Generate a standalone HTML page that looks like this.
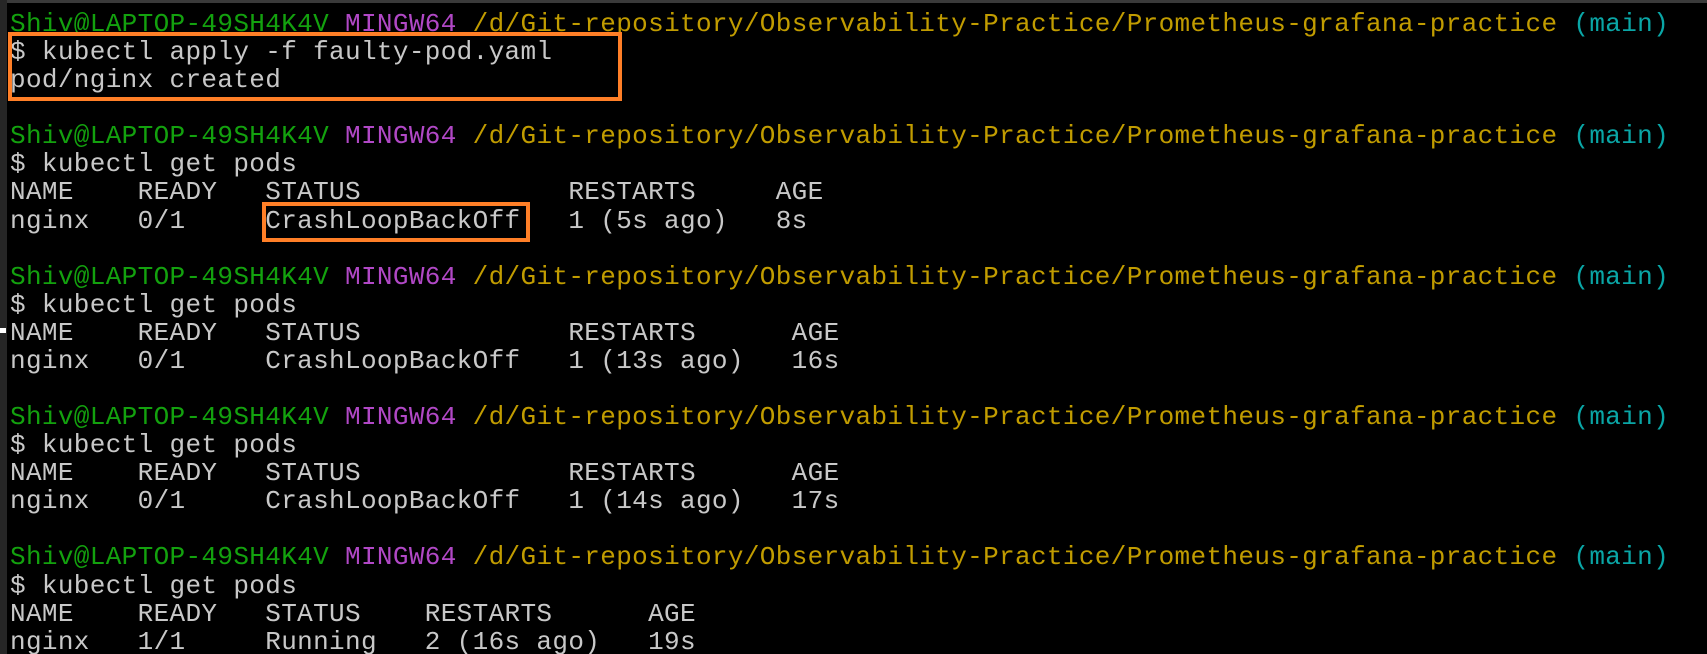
<!DOCTYPE html>
<html><head><meta charset="utf-8"><style>
html,body{margin:0;padding:0;background:#000;width:1707px;height:654px;overflow:hidden;position:relative}
.top{position:absolute;left:0;top:0;width:1707px;height:3px;background:#3a3a3a}
.left{position:absolute;left:0;top:0;width:7px;height:654px;background:#262626}
.mark{position:absolute;left:0;top:328px;width:6px;height:5px;background:#fff}
pre{position:absolute;left:10px;top:10px;margin:0;font-family:"Liberation Mono",monospace;font-size:26px;letter-spacing:0.35px;line-height:28.08px;color:#c8c8c8;white-space:pre}
.g{color:#13a10e}.m{color:#b148c6}.y{color:#c19c00}.c{color:#0aa6a6}
.box{position:absolute;border:4px solid #ff7f27;box-sizing:border-box}
</style></head><body>
<div class="top"></div><div class="left"></div><div class="mark"></div>
<pre><span class="g">Shiv@LAPTOP-49SH4K4V</span> <span class="m">MINGW64</span> <span class="y">/d/Git-repository/Observability-Practice/Prometheus-grafana-practice</span> <span class="c">(main)</span>
$ kubectl apply -f faulty-pod.yaml
pod/nginx created

<span class="g">Shiv@LAPTOP-49SH4K4V</span> <span class="m">MINGW64</span> <span class="y">/d/Git-repository/Observability-Practice/Prometheus-grafana-practice</span> <span class="c">(main)</span>
$ kubectl get pods
NAME    READY   STATUS             RESTARTS     AGE
nginx   0/1     CrashLoopBackOff   1 (5s ago)   8s

<span class="g">Shiv@LAPTOP-49SH4K4V</span> <span class="m">MINGW64</span> <span class="y">/d/Git-repository/Observability-Practice/Prometheus-grafana-practice</span> <span class="c">(main)</span>
$ kubectl get pods
NAME    READY   STATUS             RESTARTS      AGE
nginx   0/1     CrashLoopBackOff   1 (13s ago)   16s

<span class="g">Shiv@LAPTOP-49SH4K4V</span> <span class="m">MINGW64</span> <span class="y">/d/Git-repository/Observability-Practice/Prometheus-grafana-practice</span> <span class="c">(main)</span>
$ kubectl get pods
NAME    READY   STATUS             RESTARTS      AGE
nginx   0/1     CrashLoopBackOff   1 (14s ago)   17s

<span class="g">Shiv@LAPTOP-49SH4K4V</span> <span class="m">MINGW64</span> <span class="y">/d/Git-repository/Observability-Practice/Prometheus-grafana-practice</span> <span class="c">(main)</span>
$ kubectl get pods
NAME    READY   STATUS    RESTARTS      AGE
nginx   1/1     Running   2 (16s ago)   19s</pre>
<div class="box" style="left:8px;top:32px;width:614px;height:69px"></div>
<div class="box" style="left:262px;top:202px;width:268px;height:40px"></div>
</body></html>
